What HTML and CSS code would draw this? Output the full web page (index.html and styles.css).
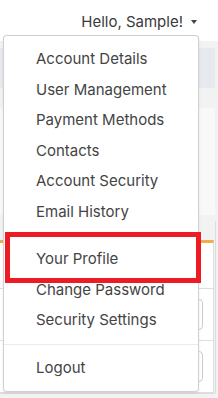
FILE: index.html
```html
<!DOCTYPE html>
<html>
<head>
  <title>Account Menu</title>
  <link rel="stylesheet" href="styles.css">
</head>
<body>
  <div class="navbar">
    <div class="user-toggle">
      <span>Hello, Sample!</span>
      <span class="caret"></span>
    </div>
  </div>

  <div class="page">
    <div class="content">
      <div class="page-header"></div>
      <div class="summary-card"></div>
      <div class="form-card">
        <div class="form-head"></div>
        <div class="form-row"><div class="field"></div></div>
        <div class="form-row"><div class="field"></div></div>
      </div>
    </div>
    <div class="gutter"></div>
  </div>

  <!-- user dropdown, open -->
  <div class="dropdown-menu">
    <a class="dropdown-item">Account Details</a>
    <a class="dropdown-item">User Management</a>
    <a class="dropdown-item">Payment Methods</a>
    <a class="dropdown-item">Contacts</a>
    <a class="dropdown-item">Account Security</a>
    <a class="dropdown-item">Email History</a>
    <div class="dropdown-divider"></div>
    <a class="dropdown-item">Your Profile</a>
    <a class="dropdown-item">Change Password</a>
    <a class="dropdown-item">Security Settings</a>
    <div class="dropdown-divider"></div>
    <a class="dropdown-item">Logout</a>
  </div>

  <div class="highlight"></div>
</body>
</html>
```

FILE: styles.css
```css
body {
  margin: 0;
  font-family: Inter, "Noto Sans", sans-serif;
  background-color: #f2f2f2;
  color: #444;
  height: 398px;
  overflow: hidden;
}
.navbar {
  height: 41px;
  background-color: #fff;
  display: flex;
  justify-content: flex-end;
  align-items: center;
}
.user-toggle {
  display: flex;
  align-items: center;
  font-size: 15px;
  color: #3a3a3a;
  margin-right: 21px;
  margin-top: 2px;
}
.caret {
  width: 0;
  height: 0;
  margin-left: 8px;
  border-left: 3px solid transparent;
  border-right: 3px solid transparent;
  border-top: 4px solid #444;
}
.page {
  display: flex;
}
.content {
  width: 215px;
  padding-top: 7px;
}
.page-header {
  height: 40px;
  background-color: #e6eaee;
}
.summary-card {
  height: 107px;
  margin-top: 20px;
  background-color: #f8f8f8;
}
.form-card {
  margin-top: 25px;
  width: 213px;
  background-color: #fff;
  border-top: 3px solid #f0ad4e;
  border-right: 1px solid #ddd;
  border-bottom: 1px solid #ddd;
}
.form-head {
  height: 45px;
  border-bottom: 1px solid #ddd;
}
.form-row {
  height: 51px;
  border-bottom: 1px solid #ddd;
  display: flex;
  justify-content: flex-end;
  align-items: center;
}
.field {
  width: 60px;
  height: 29px;
  margin-right: 10px;
  border: 1px solid #ccc;
  border-radius: 4px;
}
.gutter {
  flex-grow: 1;
  border-left: 1px solid #ddd;
  margin-top: 180px;
}
.dropdown-menu {
  position: absolute;
  top: 35px;
  left: 3px;
  width: 194px;
  padding: 8px 0;
  background-color: #fff;
  border: 1px solid rgba(0, 0, 0, 0.18);
  border-radius: 4px;
  box-shadow: 0 1px 3px rgba(0, 0, 0, 0.08);
  display: flex;
  flex-direction: column;
}
.dropdown-item {
  display: block;
  padding: 4px 0 4px 32px;
  font-size: 15px;
  line-height: 22.5px;
  color: #444;
  white-space: nowrap;
}
.dropdown-divider {
  height: 0;
  margin: 8px 0;
  border-top: 1px solid #e9ecef;
}
.highlight {
  position: absolute;
  top: 232px;
  left: 5px;
  width: 186px;
  height: 41px;
  border: 5px solid #ed1c24;
}
```
